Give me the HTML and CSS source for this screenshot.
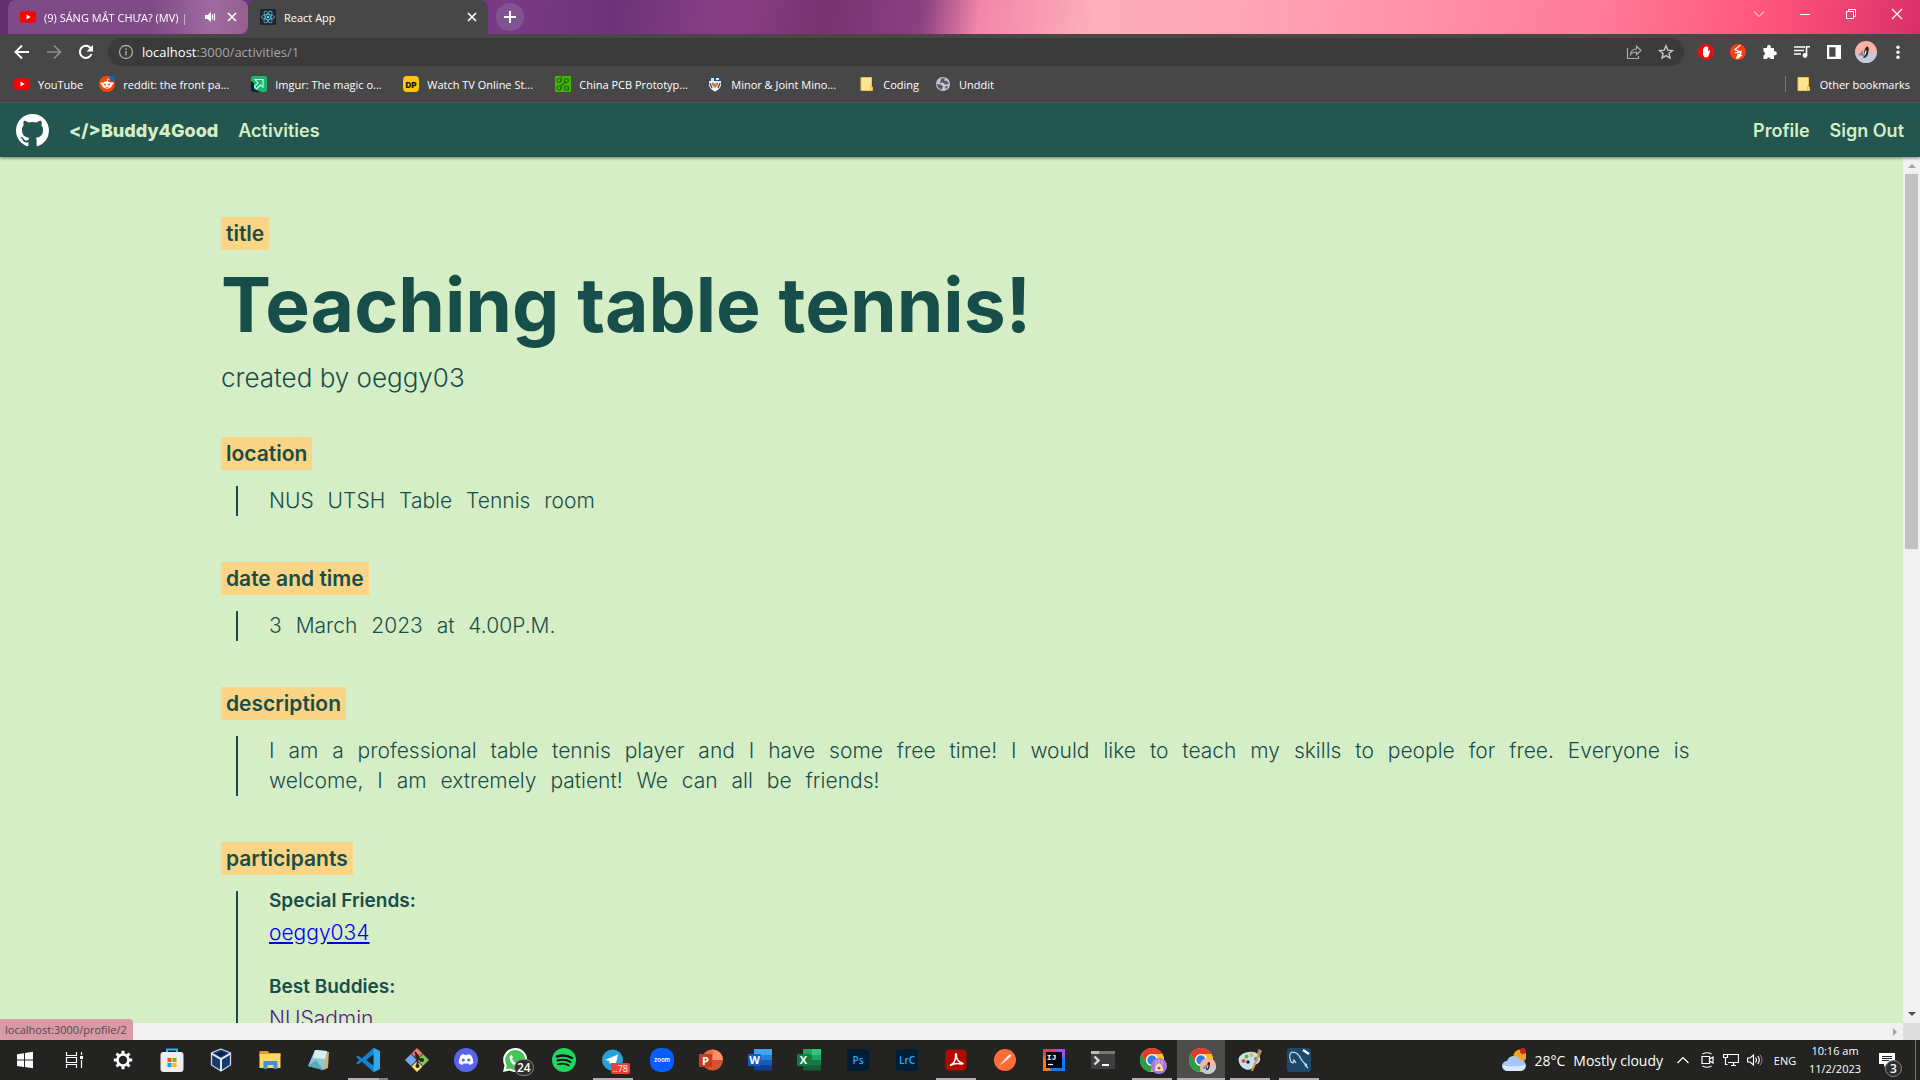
FILE: index.html
```html
<!DOCTYPE html>
<html lang="en">
<head>
<meta charset="utf-8">
<title>React App</title>
<link rel="stylesheet" href="styles.css">
</head>
<body>
<svg class="defs" width="0" height="0" aria-hidden="true">
  <symbol id="i-youtube" viewBox="0 0 16 16"><rect y="2.300" width="16" height="11.400" rx="2.500" fill="#f00"/><path d="M6.500 5.500v5l4.200-2.500z" fill="#fff"/></symbol>
  <symbol id="i-close" viewBox="0 0 16 16"><path d="M4 4l8 8M12 4l-8 8" stroke="#fff" stroke-width="1.700"/></symbol>
  <symbol id="i-folder" viewBox="0 0 16 16"><path d="M2 1.500h10.500v9.500h1v3.500H2z" fill="#ffe591" stroke="#e9c34c"/><path d="M11.500 14v-3.500h1.500" fill="none" stroke="#e9b93c"/></symbol>
  <symbol id="i-chrome" viewBox="0 0 24 24"><circle cx="12" cy="12" r="12" fill="#fcc31e"/><path d="M1.600 6A12 12 0 0 1 22.400 6H12a6 6 0 0 0-5.200 9z" fill="#e33b2e"/><path d="M1.600 6A12 12 0 0 0 12 24l5.200-9a6 6 0 0 1-10.400 0z" fill="#2a9d4b"/><path d="M22.400 6H12v12l-1 5.900A12 12 0 0 0 22.400 6z" fill="#fcc31e"/><circle cx="12" cy="12" r="6" fill="#fff"/><circle cx="12" cy="12" r="4.700" fill="#2f7be8"/></symbol>
  <symbol id="i-penguin" viewBox="0 0 22 22"><circle cx="11" cy="11" r="11" fill="#f9b3a3"/><path d="M0 12l22-1A11 11 0 0 1 2 17.300z" fill="#c3c9da"/><path d="M3 14l5-5v6z" fill="#8b8793"/><path d="M11.500 5.500Q14.500 5 13.500 10 13 16.500 8.500 17 8.500 9 11.500 5.500z" fill="#26242a"/><path d="M11 8.500Q12.500 11 9.300 15.500 9.300 11 11 8.500z" fill="#fff"/></symbol>
</svg>

<header class="browser">
  <div class="tabstrip">
    <div class="tab tab-idle">
      <svg class="ico16"><use href="#i-youtube"/></svg>
      <span class="tab-title tab-fade">(9) SÁNG MẮT CHƯA? (MV) |</span>
      <svg class="ico16 tab-sound" viewBox="0 0 16 16"><path d="M3 6h2.500L9 3v10l-3.500-3H3z" fill="#fff"/><path d="M10.500 5.500v5M12.500 4.500v7" stroke="#fff" stroke-width="1.200"/></svg>
      <button class="icon-btn tab-close" aria-label="Close tab"><svg class="ico16"><use href="#i-close"/></svg></button>
    </div>
    <div class="tab tab-active">
      <svg class="ico16" viewBox="0 0 16 16"><rect width="16" height="16" rx="1.500" fill="#20232a"/><g fill="none" stroke="#52b5cf" stroke-width=".9"><ellipse cx="8" cy="8" rx="6.500" ry="2.500"/><ellipse cx="8" cy="8" rx="6.500" ry="2.500" transform="rotate(60 8 8)"/><ellipse cx="8" cy="8" rx="6.500" ry="2.500" transform="rotate(120 8 8)"/></g><circle cx="8" cy="8" r="1.300" fill="#61dafb"/></svg>
      <span class="tab-title">React App</span>
      <button class="icon-btn tab-close" aria-label="Close tab"><svg class="ico16"><use href="#i-close"/></svg></button>
    </div>
    <button class="icon-btn new-tab" aria-label="New tab"><svg class="ico16" viewBox="0 0 16 16"><path d="M8 2v12M2 8h12" stroke="#fff" stroke-width="2"/></svg></button>
    <div class="window-controls">
      <button class="icon-btn" aria-label="Search tabs"><svg viewBox="0 0 16 16" class="ico16"><path d="M3 5.500l5 5 5-5" fill="none" stroke="#fff"/></svg></button>
      <button class="icon-btn" aria-label="Minimise"><svg viewBox="0 0 16 16" class="ico16"><path d="M3 8.500h10" stroke="#fff"/></svg></button>
      <button class="icon-btn" aria-label="Restore"><svg viewBox="0 0 16 16" class="ico16"><path d="M3.500 5.500h7v7h-7zM5.500 5.500v-2h7v7h-2" fill="none" stroke="#fff"/></svg></button>
      <button class="icon-btn" aria-label="Close window"><svg viewBox="0 0 16 16" class="ico16"><path d="M3 3l10 10M13 3L3 13" stroke="#fff" stroke-width="1.100"/></svg></button>
    </div>
  </div>

  <div class="toolbar">
    <button class="icon-btn" aria-label="Back"><svg viewBox="0 0 16 16" class="ico16"><path d="M15 8H2M8 1.500L1.500 8 8 14.500" fill="none" stroke="#fff" stroke-width="1.900"/></svg></button>
    <button class="icon-btn" aria-label="Forward"><svg viewBox="0 0 16 16" class="ico16"><path d="M1 8h13M8 1.500L14.500 8 8 14.500" fill="none" stroke="#8f8f8f" stroke-width="1.700"/></svg></button>
    <button class="icon-btn" aria-label="Reload"><svg viewBox="0 0 16 16" class="ico16"><path d="M13.500 10A6 6 0 1 1 12.300 3.800L14 5.500" fill="none" stroke="#fff" stroke-width="2"/><path d="M15 1v6.500H8.500z" fill="#fff"/></svg></button>
    <div class="omnibox">
      <svg viewBox="0 0 16 16" class="ico16"><circle cx="8" cy="8" r="6.500" fill="none" stroke="#a9a9a9" stroke-width="1.300"/><path d="M8 7v4.500M8 4.200v1.700" stroke="#a9a9a9" stroke-width="1.500"/></svg>
      <a class="url" href="#"><span class="url-host">localhost</span>:3000/activities/1</a>
      <button class="icon-btn" aria-label="Share"><svg viewBox="0 0 16 16" class="ico16"><path d="M1.500 4v10.500h11V12" fill="none" stroke="#aaa" stroke-width="1.200"/><path d="M4.500 10.500C5 6.500 7 5 10.500 5V2.200L15 6.500l-4.500 4.200V8C8 8 6 8.500 4.500 10.500z" fill="none" stroke="#aaa" stroke-width="1.200"/></svg></button>
      <button class="icon-btn" aria-label="Bookmark this tab"><svg viewBox="0 0 16 16" class="ico16"><path d="M8 1.800l1.800 4.300 4.700.4-3.600 3 1.100 4.600L8 11.600l-4 2.500 1.100-4.600-3.600-3 4.700-.4z" fill="none" stroke="#c8c8c8" stroke-width="1.400"/></svg></button>
    </div>
    <button class="icon-btn" aria-label="Ad blocker"><svg viewBox="0 0 16 16" class="ico16"><path d="M4.700 0h6.600L16 4.700v6.600L11.300 16H4.700L0 11.300V4.700z" fill="#e0130f"/><path d="M5 8V4.500h1.200V3h1.400v-.700h1.300V3h1.300v4.500l1.300-1.300.7.600L10.500 12 9.500 13.300H6.500L5 11z" fill="#fff"/></svg></button>
    <button class="icon-btn" aria-label="Extension"><svg viewBox="0 0 16 16" class="ico16"><circle cx="8" cy="8" r="8" fill="#ff3c12"/><path d="M10.500 1L5 5.500l4 2-4 1.500M7 9.500l4-2-.5 2.500-4 4.500 1.500-4 3 1-3.500 3" fill="none" stroke="#fff" stroke-width="1.300"/></svg></button>
    <button class="icon-btn" aria-label="Extensions"><svg viewBox="0 0 16 16" class="ico16"><path d="M1.500 4h3.800a2 2 0 1 1 3.400 0H12v3.500a2 2 0 1 1 0 3.600V15H8.700a1.900 1.900 0 0 0-3.700 0H1.500v-3.700a1.900 1.900 0 0 0 0-3.700z" fill="#fff"/></svg></button>
    <button class="icon-btn" aria-label="Media controls"><svg viewBox="0 0 16 16" class="ico16"><path d="M0 3h11M0 6.500h10M0 10h7" stroke="#fff" stroke-width="1.600"/><path d="M12.500 11.500V2.800H16" fill="none" stroke="#fff" stroke-width="1.600"/><circle cx="11" cy="11.500" r="2.400" fill="#fff"/></svg></button>
    <button class="icon-btn" aria-label="Side panel"><svg viewBox="0 0 16 16" class="ico16"><path d="M1 1h14v14H1zM3.200 3.200v9.600h6.300V3.200z" fill="#fff" fill-rule="evenodd"/></svg></button>
    <button class="icon-btn" aria-label="Profile"><svg class="ico22"><use href="#i-penguin"/></svg></button>
    <button class="icon-btn" aria-label="Menu"><svg viewBox="0 0 16 16" class="ico16"><g fill="#fff"><circle cx="8" cy="3.200" r="1.700"/><circle cx="8" cy="8.200" r="1.700"/><circle cx="8" cy="13.200" r="1.700"/></g></svg></button>
  </div>

  <nav class="bookmarks" aria-label="Bookmarks">
    <a href="#"><svg class="ico16"><use href="#i-youtube"/></svg><span>YouTube</span></a>
    <a href="#"><svg class="ico16" viewBox="0 0 16 16"><circle cx="8" cy="8" r="8" fill="#ff4500"/><path d="M8 6l1-3 2.500.7" fill="none" stroke="#fff" stroke-width=".9"/><ellipse cx="8" cy="9" rx="5" ry="3.700" fill="#fff"/><circle cx="2.800" cy="7.500" r="1.200" fill="#fff"/><circle cx="13.200" cy="7.500" r="1.200" fill="#fff"/><circle cx="6" cy="8.500" r="1" fill="#ff4500"/><circle cx="10" cy="8.500" r="1" fill="#ff4500"/><path d="M6 11q2 1 4 0" fill="none" stroke="#ff4500" stroke-width=".7"/><circle cx="13.200" cy="2.800" r="2.800" fill="#0a6ac2"/></svg><span class="bm-long">reddit: the front pa...</span></a>
    <a href="#"><svg class="ico16" viewBox="0 0 16 16"><rect width="16" height="16" rx="2" fill="#1bb76e"/><path d="M0 5l3 2v6l7 3H2a2 2 0 0 1-2-2z" fill="#171544"/><path d="M4 3.500h8v7.500l-2.500-2-4 4-2-2.500 3.500-3.500z" fill="#1bb76e" stroke="#d8fbe9" stroke-width="1.100"/></svg><span class="bm-long">Imgur: The magic o...</span></a>
    <a href="#"><svg class="ico16" viewBox="0 0 16 16"><rect width="16" height="16" rx="4" fill="#ffc50d"/><text x="8" y="11.500" text-anchor="middle" class="glyph-dp">DP</text></svg><span class="bm-long">Watch TV Online St...</span></a>
    <a href="#"><svg class="ico16" viewBox="0 0 16 16"><rect width="16" height="16" fill="#43b500"/><g fill="none" stroke="#1c6b08" stroke-width="1.200"><circle cx="4" cy="4.500" r="2"/><circle cx="11.500" cy="4.500" r="2"/><circle cx="4" cy="12" r="2"/><circle cx="11.500" cy="12" r="2"/><path d="M6 6V2l1-1.500M10 6l-2 3M6 13.500V9.500L8 8M13.500 14.500V11"/></g></svg><span class="bm-long">China PCB Prototyp...</span></a>
    <a href="#"><svg class="ico16" viewBox="0 0 16 16"><path d="M2 1h12v7c0 4-3 6-6 7.500C5 14 2 12 2 8z" fill="#f2f2f2"/><path d="M2 1h12v4H2z" fill="#2b4a7d"/><path d="M4 2h3v3H4zM9 2h3v2H9z" fill="#dfe5ee"/><path d="M5 6l3 2 3-2v3l-3 3-3-3z" fill="#ce7a3c"/><path d="M3 7l2 5M13 7l-2 5" stroke="#334a75" stroke-width="1.300"/></svg><span class="bm-long">Minor &amp; Joint Mino...</span></a>
    <a href="#"><svg class="ico16"><use href="#i-folder"/></svg><span>Coding</span></a>
    <a href="#"><svg class="ico16" viewBox="0 0 16 16"><circle cx="8" cy="8" r="7" fill="#c3c7cc"/><path d="M6 2.500l4-.5-1 2.500 3 .5 2 3-4 .5-2-2-3 .5zM1.500 8l4 .5 2.500 2-1.500 3.500-3-2zM10 10.500l3-.5-2 3.500z" fill="#55595e"/></svg><span>Unddit</span></a>
    <a href="#" class="bm-other"><svg class="ico16"><use href="#i-folder"/></svg><span>Other bookmarks</span></a>
  </nav>
</header>

<nav class="navbar">
  <a href="#" aria-label="GitHub"><svg class="github" viewBox="0 0 16 16"><path fill="#fff" d="M8 0C3.580 0 0 3.580 0 8c0 3.540 2.290 6.530 5.470 7.590.4.070.55-.17.55-.38 0-.19-.01-.82-.01-1.490-2.010.37-2.530-.49-2.690-.94-.09-.23-.48-.94-.82-1.130-.28-.15-.68-.52-.01-.53.63-.01 1.080.58 1.230.82.72 1.210 1.870.87 2.330.66.070-.52.28-.87.51-1.070-1.780-.2-3.640-.89-3.640-3.950 0-.87.31-1.590.82-2.150-.08-.2-.36-1.020.08-2.120 0 0 .67-.21 2.200.82.64-.18 1.320-.27 2-.27s1.360.09 2 .27c1.530-1.040 2.200-.82 2.200-.82.44 1.100.16 1.920.08 2.120.51.560.82 1.270.82 2.150 0 3.070-1.870 3.750-3.650 3.950.29.25.54.73.54 1.480 0 1.070-.01 1.930-.01 2.200 0 .21.15.46.55.38A8.010 8.010 0 0 0 16 8c0-4.420-3.580-8-8-8z"/></svg></a>
  <a href="#" class="brand">&lt;/&gt;Buddy4Good</a>
  <a href="#">Activities</a>
  <a href="#" class="nav-end">Profile</a>
  <a href="#">Sign Out</a>
</nav>

<div class="viewport">
  <main class="page">
    <section class="intro">
      <h2 class="tag">title</h2>
      <h1>Teaching table tennis!</h1>
      <p class="author">created by oeggy03</p>
    </section>
    <section>
      <h2 class="tag">location</h2>
      <p class="detail">NUS UTSH Table Tennis room</p>
    </section>
    <section>
      <h2 class="tag">date and time</h2>
      <p class="detail">3 March 2023 at 4.00P.M.</p>
    </section>
    <section>
      <h2 class="tag">description</h2>
      <p class="detail">I am a professional table tennis player and I have some free time! I would like to teach my skills to people for free. Everyone is welcome, I am extremely patient! We can all be friends!</p>
    </section>
    <section>
      <h2 class="tag">participants</h2>
      <div class="detail people">
        <h3>Special Friends:</h3>
        <a href="#" class="person person-hover">oeggy034</a>
        <h3>Best Buddies:</h3>
        <a href="#" class="person person-visited">NUSadmin</a>
      </div>
    </section>
  </main>
  <div class="scroll-v"><i class="arrow arrow-up"></i><i class="thumb"></i><i class="arrow arrow-down"></i></div>
  <div class="scroll-h"><i class="arrow arrow-right"></i></div>
  <div class="scroll-corner"></div>
  <div class="status">localhost:3000/profile/2</div>
</div>

<footer class="taskbar">
  <div class="apps">
    <button class="app" aria-label="Start"><svg viewBox="0 0 24 24"><path d="M4 6.200l7-1v6.400H4zM12 5l8-1.200v7.800h-8zM4 12.500h7v6.400l-7-1zM12 12.500h8v7.800L12 19z" fill="#fff"/></svg></button>
    <button class="app" aria-label="Task view"><svg viewBox="0 0 24 24"><path d="M4.500 4v3.500h10V4M4.500 20v-3.500h10V20M4.500 9.500h10v5h-10zM19.500 4v3M19.500 12v8" fill="none" stroke="#fff" stroke-width="1.200"/><rect x="18" y="8" width="3" height="3" fill="#fff"/></svg></button>
    <button class="app" aria-label="Settings"><svg viewBox="0 0 24 24"><circle cx="12" cy="12" r="5.500" fill="none" stroke="#fff" stroke-width="2.600"/><path d="M12 2.800v3.500M12 17.700v3.500M2.800 12h3.500M17.700 12h3.500M5.500 5.500L8 8M16 16l2.500 2.500M5.500 18.500L8 16M16 8l2.500-2.500" stroke="#fff" stroke-width="3"/></svg></button>
    <button class="app" aria-label="Microsoft Store"><svg viewBox="0 0 24 24"><path d="M7 5V1.500h10V5" fill="none" stroke="#2db4f1" stroke-width="2"/><rect x=".5" y="4" width="23" height="20" rx="3" fill="#eee"/><path d="M7.500 10h4v4h-4z" fill="#f25022"/><path d="M12.500 10h4v4h-4z" fill="#7fba00"/><path d="M7.500 15h4v4h-4z" fill="#00a4ef"/><path d="M12.500 15h4v4h-4z" fill="#ffb900"/></svg></button>
    <button class="app" aria-label="VirtualBox"><svg viewBox="0 0 24 24"><path d="M12 1l9.500 4v12L12 23l-9.500-6V5z" fill="#14396f" stroke="#c7d3e6" stroke-width="1.300"/><path d="M2.500 5.500L12 11l9.500-5.500M12 11v12" fill="none" stroke="#e4ebf6" stroke-width="2"/><path d="M7 5.500l5-2 5 2-5 3z" fill="#0a1f44"/></svg></button>
    <button class="app" aria-label="File Explorer"><svg viewBox="0 0 24 24"><path d="M1.500 3h8l2 2h11v3h-21z" fill="#e2a01b"/><path d="M1.500 6h21v14h-21z" fill="#ffd766"/><path d="M5.500 21v-8h14v8h-4v-4h-6v4z" fill="#3b94d9"/></svg></button>
    <button class="app" aria-label="Notepad"><svg viewBox="0 0 24 24"><path d="M9 2l13 2-1 16-5 2z" fill="#cfae7a"/><path d="M8 2l12 1-4 19L1 18z" fill="#8fc9d3"/><path d="M8 2l12 1-2 8-12-1z" fill="#d7eef1"/><path d="M1 18l8-6 7 10z" fill="#58a9b5"/></svg></button>
    <button class="app running stacked" aria-label="VS Code"><svg viewBox="0 0 24 24"><path d="M17.500 0L24 3v18l-6.500 3L5.800 13.500 2 16.500 0 15.300 3.500 12 0 8.700 2 7.500l3.800 3z" fill="#0f86ce"/><path d="M17.500 0L24 3v18l-6.500 3z" fill="#2daaf2"/><path d="M17.500 6.500v11L10 12z" fill="#222"/></svg></button>
    <button class="app" aria-label="Git"><svg viewBox="0 0 24 24"><path d="M12 0l5.500 5.500L12 11 6.500 5.500z" fill="#f0776f"/><path d="M6 6l5.500 6L6 18l-6-6z" fill="#76a7f5"/><path d="M18 6l6 6-6 6-6-6z" fill="#7fc65a"/><path d="M12 13l5.500 5.500L12 24l-5.500-5.500z" fill="#ffe074"/><path d="M10 4l2.500 4v11M12.500 9l4 4" stroke="#2a211e" stroke-width="1.800" fill="none"/><g fill="#2a211e"><circle cx="12" cy="8" r="2"/><circle cx="17" cy="12" r="2"/><circle cx="12.500" cy="18" r="2"/></g></svg></button>
    <button class="app" aria-label="Discord"><svg viewBox="0 0 24 24"><circle cx="12" cy="12" r="12" fill="#5865f2"/><path d="M7 7q2-1 3-1l.5 1h3l.5-1q1 0 3 1 2.500 4 2.300 8-2 1.700-3.700 2l-1-1.600h-5.200l-1 1.600q-1.700-.3-3.700-2Q4.500 11 7 7z" fill="#fff"/><circle cx="9.300" cy="12" r="1.600" fill="#5865f2"/><circle cx="14.700" cy="12" r="1.600" fill="#5865f2"/></svg></button>
    <button class="app" aria-label="WhatsApp"><svg viewBox="0 0 24 24"><path d="M12 0a12 12 0 1 1-5.500 22.500L0 24l1.500-6.500A12 12 0 0 1 12 0z" fill="#fff"/><path d="M12 2a10 10 0 1 1-5 18.500L3 21.300l.8-4A10 10 0 0 1 12 2z" fill="#45c655"/><path d="M8.500 6.500l1.500 3-1 1.500q1.500 3 4 4l1.500-1.500 3 1.500q-.5 3-3 3-7-1-8-8 0-3 2-3.500z" fill="#fff"/></svg><span class="count">24</span></button>
    <button class="app" aria-label="Spotify"><svg viewBox="0 0 24 24"><circle cx="12" cy="12" r="12" fill="#1ed760"/><g fill="none" stroke="#111" stroke-linecap="round"><path d="M5 8.500q8-2.500 15 1.500" stroke-width="2.500"/><path d="M5.500 12.500q7-2 13 1.500" stroke-width="2"/><path d="M6 16.200q6-1.600 11 1.200" stroke-width="1.700"/></g></svg></button>
    <button class="app running" aria-label="Telegram"><svg viewBox="0 0 24 24"><circle cx="11.500" cy="12" r="10.500" fill="#2aa1da"/><path d="M4 12l13-5.500-2.500 11-4-3-2 1.500v-3z" fill="#fff"/></svg><span class="alert">..78</span></button>
    <button class="app" aria-label="Zoom"><svg viewBox="0 0 24 24"><rect width="24" height="24" rx="10" fill="#0b5cff"/><text x="12" y="14" text-anchor="middle" class="glyph-zoom">zoom</text></svg></button>
    <button class="app" aria-label="PowerPoint"><svg viewBox="0 0 24 24"><circle cx="13.500" cy="12" r="10.500" fill="#d35230"/><path d="M13.500 1.500A10.500 10.500 0 0 1 24 12H13.500z" fill="#ff8f6b"/><path d="M13.500 1.500v10.500H3A10.500 10.500 0 0 1 13.500 1.500z" fill="#ed6c47"/><rect y="6" width="13" height="13" rx="1" fill="#c43e1c"/><text x="6.500" y="16.500" text-anchor="middle" class="glyph-office">P</text></svg></button>
    <button class="app" aria-label="Word"><svg viewBox="0 0 24 24"><path d="M6 1h18v6H6z" fill="#41a5ee"/><path d="M6 7h18v5H6z" fill="#2b7cd3"/><path d="M6 12h18v5H6z" fill="#185abd"/><path d="M6 17h18v5.500H6z" fill="#103f91"/><rect y="6" width="13" height="12" rx="1" fill="#185abd"/><text x="6.500" y="16" text-anchor="middle" class="glyph-office">W</text></svg></button>
    <button class="app" aria-label="Excel"><svg viewBox="0 0 24 24"><path d="M6 1h9v6H6z" fill="#21a366"/><path d="M15 1h9v6h-9z" fill="#33c481"/><path d="M6 7h9v10H6z" fill="#107c41"/><path d="M15 7h9v5h-9z" fill="#21a366"/><path d="M15 12h9v5h-9z" fill="#107c41"/><path d="M6 17h18v5.500H6z" fill="#185c37"/><rect y="6" width="13" height="12" rx="1" fill="#107c41"/><text x="6.500" y="16" text-anchor="middle" class="glyph-office">X</text></svg></button>
    <button class="app" aria-label="Photoshop"><svg viewBox="0 0 24 24"><rect x="1" y="1" width="22" height="22" rx="4" fill="#001e36"/><text x="12" y="15.500" text-anchor="middle" class="glyph-adobe">Ps</text></svg></button>
    <button class="app" aria-label="Lightroom Classic"><svg viewBox="0 0 24 24"><rect x="1" y="1" width="22" height="22" rx="4" fill="#001e36"/><text x="12" y="15.500" text-anchor="middle" class="glyph-adobe">LrC</text></svg></button>
    <button class="app running" aria-label="Acrobat"><svg viewBox="0 0 24 24"><rect x="1.500" y="1.500" width="21" height="21" rx="4" fill="#b30b00"/><path d="M6 17.500c4-2 6-6 5.500-10.500 0-2 1.500-1.500 1 .5-.5 3 2 6.500 5.500 7.500 2 .5 1 1.500-1 1-4-1-8 0-11 1.500z" fill="none" stroke="#fff" stroke-width="1.400"/></svg></button>
    <button class="app" aria-label="Postman"><svg viewBox="0 0 24 24"><circle cx="12" cy="12" r="11" fill="#ff6c37"/><path d="M6 18l7-8 4-4 1.500 1.500L15 11l-7 5.500z" fill="#fff"/></svg></button>
    <button class="app" aria-label="IntelliJ IDEA"><svg viewBox="0 0 24 24"><rect x="1" y="1" width="22" height="22" fill="#087cfa"/><path d="M1 1h15L1 16z" fill="#fe315d"/><path d="M1 6v17h8z" fill="#f97a12"/><path d="M12 1h11v10z" fill="#9d55e8"/><rect x="4" y="4" width="16" height="16" fill="#0b0513"/><text x="9.500" y="12" text-anchor="middle" class="glyph-ij">IJ</text><path d="M6 16.500h5" stroke="#fff" stroke-width="1.200"/></svg></button>
    <button class="app" aria-label="Terminal"><svg viewBox="0 0 24 24"><rect y="3" width="24" height="18" rx="1" fill="#3f3f3f"/><path d="M0 3h8v3H0z" fill="#bbb"/><path d="M8 3h16v3H8z" fill="#777"/><path d="M3.500 8.500l4 4-4 4" fill="none" stroke="#ddd" stroke-width="2.400"/><path d="M11 17h7" stroke="#fff" stroke-width="2"/></svg></button>
    <button class="app running" aria-label="Chrome"><svg viewBox="0 0 24 24"><use href="#i-chrome"/></svg><svg class="avatar" viewBox="0 0 16 16"><circle cx="8" cy="8" r="8" fill="#a678dd"/><path d="M4 13c0-5 1-6 4-8 3 2 4 3 4 8z" fill="#f6e2b4"/><path d="M5 2v5M8 1v5M11 2v5" stroke="#f2b6c5"/><circle cx="8" cy="10" r="1.500" fill="#cf4a3c"/></svg></button>
    <button class="app running current" aria-label="Chrome, React App"><svg viewBox="0 0 24 24"><use href="#i-chrome"/></svg><svg class="avatar"><use href="#i-penguin"/></svg></button>
    <button class="app running" aria-label="Paint"><svg viewBox="0 0 24 24"><path d="M11 4c7-1 12 3 11 8s-6 4-7 7-6 4-10 1-6-9-3-12 6-4 9-4z" fill="#c4e2f3"/><circle cx="5.500" cy="13" r="2" fill="#e8503a"/><circle cx="8.500" cy="8.500" r="2" fill="#52b848"/><circle cx="13.500" cy="7" r="2" fill="#f6b21b"/><circle cx="10" cy="14" r="1.700" fill="#222"/><circle cx="18" cy="11" r="2" fill="#3b8bd6"/><path d="M13 23l7-17 2 1-7 16z" fill="#e3943a"/><path d="M19 6l1.500-5L24 2.500 22.500 7z" fill="#b49065"/></svg></button>
    <button class="app running" aria-label="MySQL Workbench"><svg viewBox="0 0 24 24"><rect width="24" height="24" rx="3" fill="#1d4a6b"/><path d="M4 14q-3-8 1-10 6 0 9 7 2 4 6 6l-2 0 3 3M4 14l2 1 1-3 2 3" fill="none" stroke="#d9e6ef" stroke-width="1.100"/><path d="M16 2l3 2 3 2" stroke="#fff" stroke-width="2.200"/></svg></button>
  </div>
  <div class="tray">
    <button class="weather"><svg class="ico24" viewBox="0 0 24 24"><circle cx="18" cy="8" r="6.500" fill="#f7a21b"/><path d="M5 23a5 5 0 0 1 0-10 7 7 0 0 1 13-1 5.500 5.500 0 0 1 1 11z" fill="#a9c6f8"/><path d="M5 23a5 5 0 0 1-4-6q8 3 22 0 1 5-4 6z" fill="#dbe8ff"/><circle cx="21" cy="3" r="3" fill="#c42b1c"/></svg><span>28°C</span><span>Mostly cloudy</span></button>
    <button class="tray-icon" aria-label="Show hidden icons"><svg viewBox="0 0 16 16" class="ico16"><path d="M2.500 11L8 5.500 13.500 11" fill="none" stroke="#fff" stroke-width="1.200"/></svg></button>
    <button class="tray-icon" aria-label="Meet now"><svg viewBox="0 0 16 16" class="ico16"><path d="M3 4.500h7.500v7H3zM10.500 7L14 5v6l-3.500-2M3.500 2q4.500-2.500 9 0M3.500 14q4.500 2.500 9 0" fill="none" stroke="#fff" stroke-width="1.200"/></svg></button>
    <button class="tray-icon" aria-label="Network"><svg viewBox="0 0 16 16" class="ico16"><path d="M4.500 2.500h11v8H5M8 13.500h5M10.500 10.500v3M.5 2.500h4v3h-4zM2.500 5.500v7h2" fill="none" stroke="#fff" stroke-width="1.200"/></svg></button>
    <button class="tray-icon" aria-label="Volume"><svg viewBox="0 0 16 16" class="ico16"><path d="M.5 6H3l3.500-3v10L3 10H.5zM8.500 5.500q2 2.500 0 5M10.800 4q3 4 0 8" fill="none" stroke="#fff" stroke-width="1.200"/><path d="M13 2.500q4 5.500 0 11" fill="none" stroke="#888"/></svg></button>
    <button class="lang">ENG</button>
    <button class="clock"><time>10:16 am</time><time>11/2/2023</time></button>
    <button class="notices" aria-label="Notifications"><svg viewBox="0 0 16 16" class="ico16"><path d="M0 1h16v11H8l-3 3v-3H0z" fill="#fff"/><path d="M3 4.500h10M3 6.500h10M3 8.500h7" stroke="#222"/></svg><span class="count">3</span></button>
    <i class="peek"></i>
  </div>
</footer>
</body>
</html>
```
FILE: styles.css
```css
* { box-sizing: border-box; }

body {
  margin: 0;
  height: 100vh;
  display: flex;
  flex-direction: column;
  overflow: hidden;
  font-family: "Open Sans", "Noto Sans", sans-serif;
  font-size: 11px;
  color: #fff;
}

a { color: inherit; text-decoration: none; }
h1, h2, h3, p { margin: 0; }
svg { display: block; flex: none; }
.defs { position: absolute; }
.ico16 { width: 16px; height: 16px; }
.ico22 { width: 22px; height: 22px; }
.ico24 { width: 24px; height: 24px; }

button {
  border: 0;
  padding: 0;
  background: none;
  color: inherit;
  font: inherit;
}

.icon-btn {
  display: flex;
  align-items: center;
  justify-content: center;
  flex: none;
  width: 32px;
  height: 28px;
}

/* Browser frame */
.browser { flex: none; background: #474747; }

.tabstrip {
  display: flex;
  height: 34px;
  padding-left: 8px;
  background: linear-gradient(100deg, #62306e 0, #7a3a86 26%, #6d3379 32%, #8a3f84 38%, #78336f 43%, #8b4080 48%, #f086aa 51%, #ffaebb 57%, #ff9fb2 68%, #ff7b97 83%, #ff5579 92%, #d8306a 100%);
}

.tab {
  display: flex;
  align-items: center;
  gap: 8px;
  width: 240px;
  padding: 0 2px 0 12px;
}

.tab-idle {
  background: linear-gradient(90deg, #7c4a87, #7f4a87 60%, #9f6b9f 85%, #93608f);
  border-radius: 8px 8px 8px 0;
}

.tab-active { background: #474747; border-radius: 8px 8px 0 0; }
.tab-title { flex: 1; white-space: nowrap; overflow: hidden; }
.tab-fade { mask-image: linear-gradient(90deg, #000 90%, transparent); }
.tab-close { width: 28px; }
.tab-sound { margin-right: -8px; }

.new-tab {
  align-self: center;
  width: 28px;
  margin-left: 8px;
  border-radius: 50%;
  background: #815390;
}

.window-controls { display: flex; margin-left: auto; }
.window-controls .icon-btn { width: 46px; }

.toolbar {
  display: flex;
  align-items: center;
  height: 36px;
  padding: 0 6px;
}

.omnibox {
  flex: 1;
  display: flex;
  align-items: center;
  height: 28px;
  margin: 0 6px;
  padding: 0 2px 0 10px;
  border-radius: 14px;
  background: #3a3a3a;
}

.url { flex: 1; margin-left: 8px; color: #a6a6a6; font-size: 13px; }
.url-host { color: #fff; }

.bookmarks {
  display: flex;
  align-items: center;
  gap: 16px;
  height: 33px;
  padding: 0 10px 4px 14px;
  border-bottom: 1px solid #5c5759;
}

.bookmarks a { display: flex; align-items: center; gap: 8px; white-space: nowrap; }
.bm-long { width: 112px; }
.bm-other { margin-left: auto; padding-left: 10px; border-left: 1px solid #777; }
.glyph-dp { font: 900 8px Inter, sans-serif; fill: #151515; }

/* Site navigation */
.navbar {
  flex: none;
  display: flex;
  align-items: center;
  gap: 20px;
  height: 54px;
  padding: 0 16px;
  background: #245650;
  color: #d6eec6;
  font: 600 18px Inter, sans-serif;
  box-shadow: 0 1px 3px rgba(0, 0, 0, .5);
  z-index: 1;
}

.github { width: 33px; height: 33px; }
.brand { font-weight: 800; }
.nav-end { margin-left: auto; }

/* Scrolling page area */
.viewport {
  flex: 1;
  min-height: 0;
  position: relative;
  display: grid;
  grid-template: minmax(0, 1fr) 17px / minmax(0, 1fr) 17px;
}

.page {
  overflow: hidden;
  display: flex;
  flex-direction: column;
  gap: 46px;
  padding: 60px 180px 0 221px;
  background: #d6eec6;
  color: #184e4a;
  font: 300 21px/30px Inter, sans-serif;
}

.tag {
  width: fit-content;
  padding: 0 5px;
  background: #fbd586;
  font-size: 21px;
  font-weight: 600;
  line-height: 33px;
}

h1 { margin-top: 10px; font-size: 75px; font-weight: 700; line-height: 90px; }
.author { margin-top: 15px; font-size: 26px; line-height: 26px; }

.detail {
  margin: 16px 0 0 15px;
  padding-left: 31px;
  border-left: 2px solid #184e4a;
  word-spacing: 8px;
}

.people { display: flex; flex-direction: column; align-items: flex-start; word-spacing: normal; }
.people h3 { font-size: 19px; font-weight: 600; line-height: 20px; }
.person { margin: 8px 0 30px; line-height: 28px; }
.person-hover { color: #0000ee; text-decoration: underline; }
.person-visited { color: #551a8b; }

.scroll-v, .scroll-h { display: flex; align-items: center; background: #f1f1f1; }
.scroll-v { flex-direction: column; padding: 7px 0; }
.scroll-h { justify-content: flex-end; padding-right: 6px; }
.scroll-corner { background: #dcdcdc; }
.thumb { width: 13px; height: 44%; margin-top: 6px; background: #c1c1c1; }
.arrow { border: 4px solid transparent; }
.arrow-up { border-top: 0; border-bottom-color: #a3a3a3; }
.arrow-down { margin-top: auto; border-bottom: 0; border-top-color: #505050; }
.arrow-right { border-right: 0; border-left-color: #a3a3a3; }

.status {
  position: absolute;
  left: 0;
  bottom: 0;
  height: 21px;
  padding: 0 6px 0 5px;
  border-top-right-radius: 4px;
  background: #d79aa6;
  color: #55474c;
  line-height: 21px;
}

/* Taskbar */
.taskbar {
  flex: none;
  display: flex;
  justify-content: space-between;
  height: 40px;
  background: #232321;
}

.apps { display: flex; gap: 1px; padding-left: 1px; }

.app {
  position: relative;
  display: grid;
  place-items: center;
  width: 48px;
}

.app > svg { width: 24px; height: 24px; }

.running::after {
  content: "";
  position: absolute;
  left: 4px;
  right: 4px;
  bottom: 0;
  height: 2px;
  background: #b5adaf;
}

.stacked::after { background: linear-gradient(90deg, #b5adaf 78%, #858083 78%); }
.current { background: #4d4d4b; }
.current::after { left: 0; right: 0; }

.count {
  position: absolute;
  left: 23px;
  bottom: 4px;
  min-width: 17px;
  height: 17px;
  padding: 0 2px;
  border: 1px solid #888;
  border-radius: 9px;
  background: #2e2e2d;
  font-size: 12px;
  font-weight: 600;
  line-height: 15px;
  text-align: center;
}

.alert {
  position: absolute;
  left: 22px;
  bottom: 6px;
  padding: 0 2px;
  border-radius: 2px;
  background: #f33e35;
  font-size: 9px;
  line-height: 11px;
}

.app > .avatar {
  position: absolute;
  left: 23px;
  top: 18px;
  width: 16px;
  height: 16px;
}

.glyph-zoom { font: 600 6px Inter, sans-serif; fill: #fff; }
.glyph-office { font: 700 11px "Open Sans", sans-serif; fill: #fff; }
.glyph-adobe { font: 600 10px "Open Sans", sans-serif; fill: #31a8ff; }
.glyph-ij { font: 700 8px "Liberation Mono", monospace; fill: #fff; }

.tray { display: flex; align-items: center; }
.weather { display: flex; align-items: center; gap: 8px; margin-right: 8px; font-size: 14px; }
.tray-icon { display: flex; justify-content: center; width: 24px; }
.lang { width: 36px; }
.clock { display: grid; width: 64px; line-height: 18px; }
.notices { position: relative; display: grid; place-items: center; width: 40px; height: 40px; }
.notices .count { left: 18px; bottom: 3px; }
.peek { width: 5px; height: 40px; margin-left: 8px; border-left: 1px solid #777; }
```
